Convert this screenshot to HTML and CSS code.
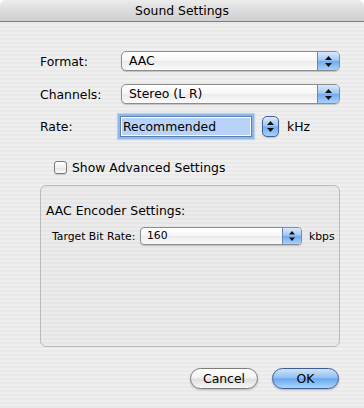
FILE: index.html
```html
<!DOCTYPE html>
<html lang="en">

<head>
    <meta charset="UTF-8">
    <meta name="viewport" content="width=device-width, initial-scale=1.0">
    <title>Sound Settings</title>
    <link rel="stylesheet" href="styles.css">
</head>

<body>
    <div class="window">
        <div class="titlebar">Sound Settings</div>

        <div class="content">
            <!-- Main settings -->
            <div class="form-row row-format">
                <span class="form-label">Format:</span>
                <div class="popup">
                    <span class="popup-value">AAC</span>
                    <span class="popup-arrows">
                        <svg width="7" height="11" viewBox="0 0 7 11"><path d="M3.5 0 L7 4 L0 4 Z M0 7 L7 7 L3.5 11 Z" fill="#111"/></svg>
                    </span>
                </div>
            </div>

            <div class="form-row row-channels">
                <span class="form-label">Channels:</span>
                <div class="popup">
                    <span class="popup-value">Stereo (L R)</span>
                    <span class="popup-arrows">
                        <svg width="7" height="11" viewBox="0 0 7 11"><path d="M3.5 0 L7 4 L0 4 Z M0 7 L7 7 L3.5 11 Z" fill="#111"/></svg>
                    </span>
                </div>
            </div>

            <div class="form-row row-rate">
                <span class="form-label">Rate:</span>
                <div class="text-field"><span class="selected">Recommended</span></div>
                <span class="stepper">
                    <svg width="7" height="11" viewBox="0 0 7 11"><path d="M3.5 0 L7 4 L0 4 Z M0 7 L7 7 L3.5 11 Z" fill="#111"/></svg>
                </span>
                <span class="unit">kHz</span>
            </div>

            <label class="check-row">
                <span class="checkbox"></span>
                <span>Show Advanced Settings</span>
            </label>

            <!-- Encoder group -->
            <div class="group-box">
                <div class="group-title">AAC Encoder Settings:</div>
                <div class="small-row">
                    <span class="small-label">Target Bit Rate:</span>
                    <div class="popup popup-small">
                        <span class="popup-value">160</span>
                        <span class="popup-arrows">
                            <svg width="6" height="10" viewBox="0 0 6 10"><path d="M3 0 L6 3.5 L0 3.5 Z M0 6.5 L6 6.5 L3 10 Z" fill="#111"/></svg>
                        </span>
                    </div>
                    <span class="unit-small">kbps</span>
                </div>
            </div>

            <div class="button-row">
                <button class="btn">Cancel</button>
                <button class="btn btn-default">OK</button>
            </div>
        </div>
    </div>
</body>

</html>
```

FILE: styles.css
```css
body {
    margin: 0;
    background: #ffffff;
    font-family: "DejaVu Sans", sans-serif;
    font-size: 12.4px;
    color: #000;
}

.window {
    width: 364px;
    height: 408px;
    overflow: hidden;
    border-radius: 6px 6px 0 0;
    background: repeating-linear-gradient(to bottom, #efefef 0, #efefef 2px, #e9e9e9 2px, #e9e9e9 4px);
}

.titlebar {
    height: 21px;
    line-height: 21px;
    text-align: center;
    font-size: 12.4px;
    border-bottom: 1px solid #7f7f7f;
    border-radius: 6px 6px 0 0;
    background: linear-gradient(to bottom, #ececec 0%, #dcdcdc 50%, #cfcfcf 100%);
}

.content {
    padding: 0 24px 0 40px;
}

.form-row {
    display: flex;
    align-items: center;
    height: 20px;
}

.row-format {
    margin-top: 29px;
}

.row-channels {
    margin-top: 13px;
}

.row-rate {
    margin-top: 12px;
    height: 21px;
}

.form-label {
    width: 81px;
    flex-shrink: 0;
}

/* Aqua popup button */
.popup {
    display: flex;
    width: 219px;
    height: 20px;
    box-sizing: border-box;
    border: 1px solid #8c8c8c;
    border-radius: 5px;
    overflow: hidden;
    background: linear-gradient(to bottom, #ffffff 0%, #f6f6f6 50%, #ebebeb 52%, #fbfbfb 100%);
    box-shadow: 0 1px 1px rgba(0, 0, 0, 0.18);
}

.popup-value {
    flex: 1;
    padding-left: 7px;
    line-height: 18px;
}

.popup-arrows {
    width: 21px;
    display: flex;
    align-items: center;
    justify-content: center;
    border-left: 1px solid #6a86b4;
    background: linear-gradient(to bottom, #d9e9fc 0%, #a3c8f2 45%, #73aaee 52%, #a6d2fb 100%);
}

.text-field {
    width: 132px;
    height: 21px;
    box-sizing: border-box;
    margin-left: -1px;
    border: 1px solid #5f7fae;
    background: #ffffff;
    padding: 1px;
    box-shadow: 0 0 0 2px #90b7e6, 0 0 1px 3px #b9d3f0;
}

.selected {
    display: block;
    height: 100%;
    padding-left: 1px;
    line-height: 17px;
    background: #b7d3f7;
}

.stepper {
    width: 17px;
    height: 21px;
    box-sizing: border-box;
    margin-left: 10px;
    display: flex;
    align-items: center;
    justify-content: center;
    border: 1px solid #44629a;
    border-radius: 5px;
    background: linear-gradient(to bottom, #d9e9fc 0%, #a3c8f2 45%, #73aaee 52%, #a6d2fb 100%);
    box-shadow: 0 1px 1px rgba(0, 0, 0, 0.2);
}

.unit {
    margin-left: 8px;
}

.check-row {
    display: flex;
    align-items: center;
    gap: 5px;
    margin: 24px 0 0 14px;
    height: 13px;
}

.checkbox {
    width: 13px;
    height: 13px;
    box-sizing: border-box;
    border: 1px solid #7a7a7a;
    border-radius: 3px;
    background: linear-gradient(to bottom, #ffffff 0%, #f1f1f1 50%, #e3e3e3 55%, #fdfdfd 100%);
    box-shadow: 0 1px 1px rgba(0, 0, 0, 0.15);
}

.group-box {
    margin-top: 11px;
    height: 162px;
    box-sizing: border-box;
    border: 1px solid #b9b9b9;
    border-radius: 6px;
    background: rgba(0, 0, 0, 0.015);
    padding: 16px 0 0 5px;
}

.group-title {
    line-height: 18px;
}

.small-row {
    display: flex;
    align-items: center;
    margin: 7px 0 0 6px;
    font-size: 10.8px;
}

.small-label {
    width: 88px;
}

.popup-small {
    width: 162px;
    height: 18px;
    border-radius: 4px;
}

.popup-small .popup-value {
    line-height: 16px;
    padding-left: 6px;
}

.popup-small .popup-arrows {
    width: 18px;
}

.unit-small {
    margin-left: 7px;
}

.button-row {
    display: flex;
    justify-content: flex-end;
    gap: 14px;
    margin-top: 21px;
    padding-right: 1px;
}

.btn {
    width: 68px;
    height: 21px;
    padding: 0;
    font-family: "DejaVu Sans", sans-serif;
    font-size: 12.4px;
    color: #000;
    border: 1px solid #7d7d7d;
    border-radius: 11px;
    background: linear-gradient(to bottom, #ffffff 0%, #f3f3f3 45%, #dedede 55%, #f8f8f8 100%);
    box-shadow: 0 1px 2px rgba(0, 0, 0, 0.25);
}

.btn-default {
    width: 67px;
    border-color: #3d5d98;
    background: linear-gradient(to bottom, #cfe3fb 0%, #93c0f1 45%, #6aa8ee 52%, #a9d6fd 100%);
}
```
